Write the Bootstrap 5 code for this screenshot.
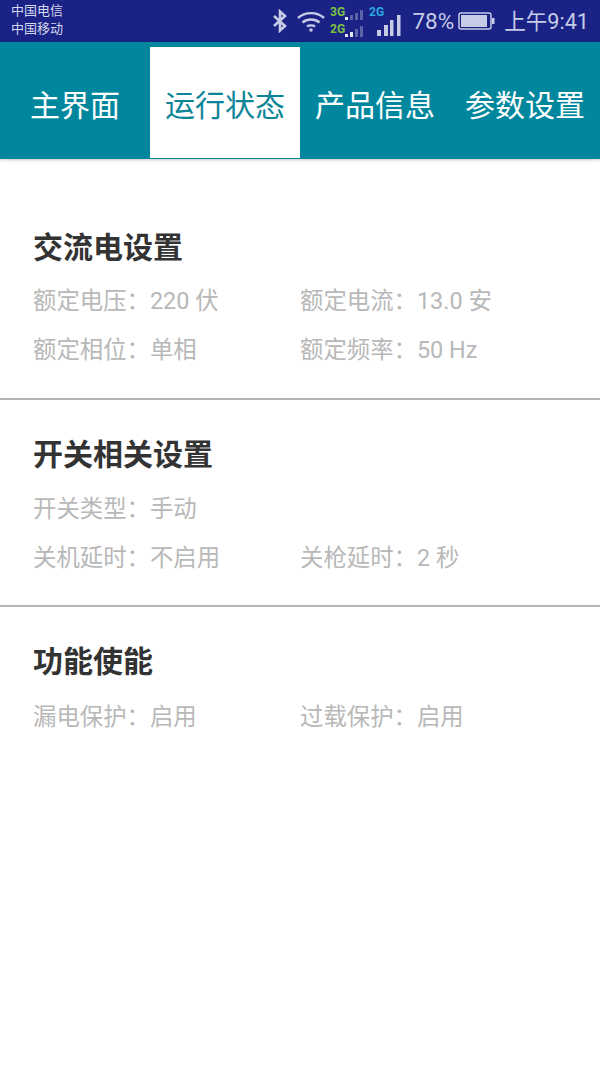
<!DOCTYPE html>
<html lang="zh"><head><meta charset="utf-8">
<link rel="stylesheet" href="https://cdn.jsdelivr.net/npm/bootstrap@5.3.0/dist/css/bootstrap.min.css">
<style>
html,body{width:600px;height:1067px;overflow:hidden;background:#fff;font-family:"Noto Sans CJK SC","Noto Sans",sans-serif}
.sbar{height:42px;background:#1a2286;color:#d5d9ee;padding:0 11px}
.carrier{font-size:13px;line-height:18px;padding-top:1px}
.pct{font-family:Roboto,sans-serif;font-size:22.500px;line-height:41px;margin-left:10px;color:#c6cbe6}
.clock{font-size:21.600px;line-height:41px;margin-left:8px;color:#c6cbe6;font-family:Roboto,"Noto Sans CJK SC",sans-serif}
.tabbar{height:117px;background:#00879e;padding-top:5px;box-shadow:0 1px 3px rgba(0,0,0,.22)}
.tabcell{width:150px;height:111px;color:#fff;font-size:30px;line-height:1}
.tabcell.on{background:#fff;color:#0d8598}
.sect{padding:66px 33px 0;height:239px}
.sect .ttl{margin-bottom:10px}
.sect2{height:207px;padding:32px 33px 0;border-top:2px solid #b4b4b4}
.sect2 .ttl{margin-bottom:11px}
.sect3{padding:32px 33px 0;border-top:2px solid #b4b4b4}
.sect3 .ttl{margin-bottom:12px}
.ttl{font-size:30px;font-weight:700;color:#333;line-height:40px}
.kv{font-size:23.400px;line-height:49px;height:49px;color:#b8b8b8}
.kv>div{width:267px}
.num{font-family:Roboto,sans-serif}
</style></head><body>
<div class="sbar d-flex justify-content-between">
<div class="carrier"><div>中国电信</div><div>中国移动</div></div>
<div class="d-flex align-items-center">
<svg width="16" height="24" viewBox="0 0 16 22" fill="none" stroke="#c6cbe6" stroke-width="2.6"><path d="M2 6l11 10-5 4.500V1.500l5 4.500L2 16"/></svg>
<svg class="ms-2" width="30" height="22" viewBox="0 0 30 22" fill="none" stroke="#c6cbe6" stroke-width="2.400"><path d="M2 8c7-6.500 19-6.500 26 0M6.500 12.500c4.500-4 12.500-4 17 0M11 16.500c2-1.500 6-1.500 8 0"/><circle cx="15" cy="20" r="1.800" fill="#c6cbe6" stroke="none"/></svg>
<svg class="ms-1" width="35" height="34" viewBox="0 0 35 34"><text x="0" y="12" font-size="12" font-weight="700" font-family="Roboto" fill="#7cc142">3G</text><text x="0" y="29" font-size="12" font-weight="700" font-family="Roboto" fill="#7cc142">2G</text><g fill="#e4e6f2"><rect x="15" y="13" width="3" height="3"/><rect x="15" y="30" width="3" height="3"/><rect x="20" y="28" width="3" height="5"/></g><g fill="#5d63a8"><rect x="20" y="11" width="3" height="5"/><rect x="25" y="9" width="3" height="7"/><rect x="30" y="6" width="3" height="10"/><rect x="25" y="25" width="3" height="8"/><rect x="30" y="22" width="3" height="11"/></g></svg>
<svg class="ms-1" width="33" height="34" viewBox="0 0 33 34"><text x="0" y="12" font-size="12" font-weight="700" font-family="Roboto" fill="#2aa7e0">2G</text><g fill="#c6cbe6"><rect x="8" y="26" width="4" height="6"/><rect x="15" y="21" width="4" height="11"/><rect x="21" y="16" width="3.500" height="16"/><rect x="28" y="11" width="3.500" height="21"/></g></svg>
<span class="pct">78%</span>
<svg class="ms-1" width="38" height="20" viewBox="0 0 38 20"><rect x="1" y="2" width="32" height="16" rx="2" fill="none" stroke="#c6cbe6" stroke-width="1.500"/><rect x="3" y="4" width="26" height="12" fill="#c6cbe6"/><rect x="34" y="7" width="2.500" height="6" fill="#c6cbe6"/></svg>
<span class="clock">上午9:41</span>
</div></div>
<div class="tabbar d-flex">
<div class="tabcell d-flex align-items-center justify-content-center">主界面</div>
<div class="tabcell on d-flex align-items-center justify-content-center">运行状态</div>
<div class="tabcell d-flex align-items-center justify-content-center">产品信息</div>
<div class="tabcell d-flex align-items-center justify-content-center">参数设置</div>
</div>
<div class="sect">
<h2 class="ttl">交流电设置</h2>
<div class="kv d-flex"><div>额定电压：<span class="num">220 </span>伏</div><div>额定电流：<span class="num">13.0 </span>安</div></div>
<div class="kv d-flex"><div>额定相位：单相</div><div>额定频率：<span class="num">50 Hz</span></div></div>
</div>
<div class="sect2">
<h2 class="ttl">开关相关设置</h2>
<div class="kv d-flex"><div>开关类型：手动</div></div>
<div class="kv d-flex"><div>关机延时：不启用</div><div>关枪延时：<span class="num">2 </span>秒</div></div>
</div>
<div class="sect3">
<h2 class="ttl">功能使能</h2>
<div class="kv d-flex"><div>漏电保护：启用</div><div>过载保护：启用</div></div>
</div>
<script src="https://cdn.jsdelivr.net/npm/bootstrap@5.3.0/dist/js/bootstrap.bundle.min.js"></script>
</body></html>
